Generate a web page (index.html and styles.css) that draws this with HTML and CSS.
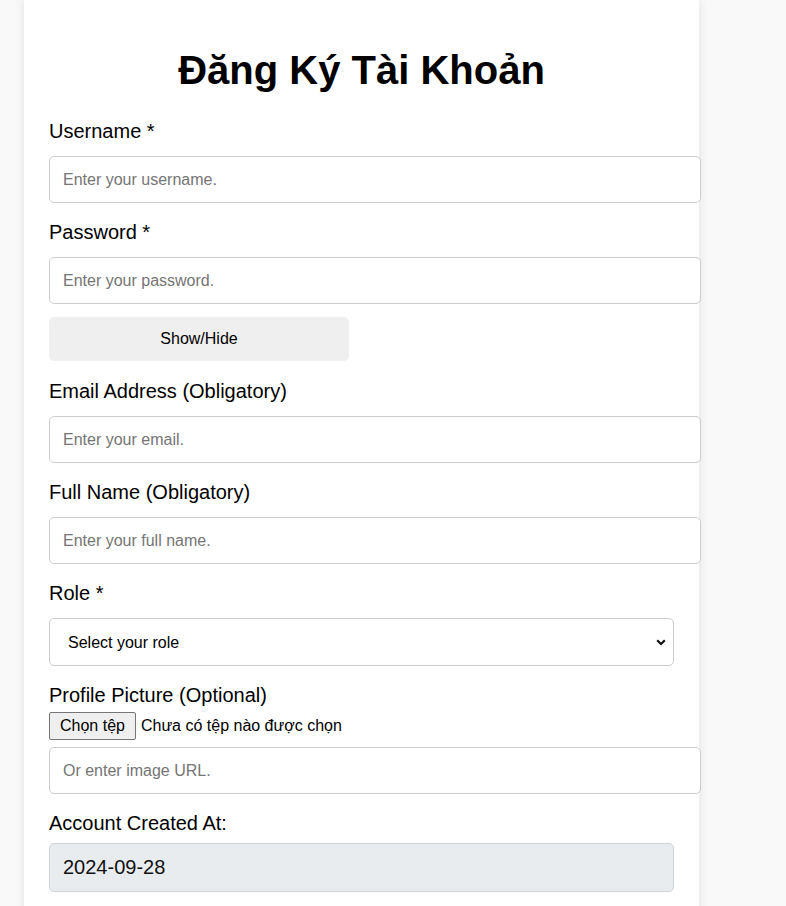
FILE: index.html
```html
<!DOCTYPE html>
<html lang="vi">
<head>
<meta charset="utf-8">
<title>Đăng Ký Tài Khoản</title>
<link rel="stylesheet" href="styles.css">
</head>
<body>
<div class="card">
  <h1 class="title">Đăng Ký Tài Khoản</h1>
  <form class="form">
    <div class="group">
      <label class="label">Username *</label>
      <input class="field" type="text" placeholder="Enter your username.">
    </div>
    <div class="group">
      <label class="label">Password *</label>
      <input class="field" type="password" placeholder="Enter your password.">
      <button type="button" class="toggle">Show/Hide</button>
    </div>
    <div class="group">
      <label class="label">Email Address (Obligatory)</label>
      <input class="field" type="email" placeholder="Enter your email.">
    </div>
    <div class="group">
      <label class="label">Full Name (Obligatory)</label>
      <input class="field" type="text" placeholder="Enter your full name.">
    </div>
    <div class="group">
      <label class="label">Role *</label>
      <div class="select-wrap">
        <select class="select">
          <option>Select your role</option>
        </select>
        <svg class="chevron" width="10" height="7" viewBox="0 0 10 7"><path d="M1.2 1.3 L5 5 L8.8 1.3" fill="none" stroke="#111" stroke-width="2.2"/></svg>
      </div>
    </div>
    <div class="group">
      <label class="label label-tight">Profile Picture (Optional)</label>
      <div class="file-row">
        <span class="file-btn">Chọn tệp</span>
        <span class="file-text">Chưa có tệp nào được chọn</span>
      </div>
      <input class="field" type="text" placeholder="Or enter image URL.">
    </div>
    <div class="group">
      <label class="label label-date">Account Created At:</label>
      <div class="date-box">2024-09-28</div>
    </div>
  </form>
</div>
</body>
</html>
```

FILE: styles.css
```css
html, body {
  margin: 0;
  padding: 0;
}
body {
  background: #f9f9f9;
  font-family: "Liberation Sans", Arial, sans-serif;
  color: #000;
}
.card {
  margin-left: 24px;
  width: 625px;
  padding: 47px 25px 40px;
  background: #fff;
  box-shadow: 0 0 10px rgba(0, 0, 0, 0.1);
  min-height: 900px;
}
.title {
  margin: 0 0 27px;
  font-size: 40px;
  line-height: 46px;
  font-weight: bold;
  text-align: center;
}
.form {
  display: flex;
  flex-direction: column;
}
.group {
  display: flex;
  flex-direction: column;
  align-items: flex-start;
  margin-bottom: 18px;
}
.label {
  font-size: 20px;
  line-height: 23px;
  margin-bottom: 13px;
}
.label-tight {
  margin-bottom: 5px;
}
.label-date {
  margin-bottom: 8px;
}
.field {
  width: 625px;
  box-sizing: content-box;
  padding: 12px 12px 12px 13px;
  border: 1px solid #ccc;
  border-radius: 5px;
  font-family: "Liberation Sans", Arial, sans-serif;
  font-size: 16px;
  line-height: 21px;
  height: 21px;
  color: #000;
  background: #fff;
  margin: 0;
  outline: none;
}
.field::placeholder {
  color: #757575;
}
.toggle {
  margin-top: 13px;
  margin-bottom: 1px;
  width: 300px;
  height: 44px;
  border: none;
  border-radius: 5px;
  background: #efefef;
  font-family: "Liberation Sans", Arial, sans-serif;
  font-size: 16px;
  color: #000;
  padding: 0;
}
.select-wrap {
  position: relative;
  width: 625px;
}
.select {
  appearance: none;
  -webkit-appearance: none;
  width: 625px;
  height: 48px;
  box-sizing: border-box;
  padding: 0 30px 0 18px;
  border: 1px solid #ccc;
  border-radius: 5px;
  background: #fff;
  font-family: "Liberation Sans", Arial, sans-serif;
  font-size: 16px;
  color: #000;
  margin: 0;
  display: block;
}
.chevron {
  position: absolute;
  right: 8px;
  top: 21px;
}
.file-row {
  display: flex;
  align-items: center;
  margin-bottom: 7px;
}
.file-btn {
  display: inline-block;
  box-sizing: border-box;
  height: 28px;
  padding: 0 10px;
  line-height: 26px;
  border: 1px solid #767676;
  border-radius: 2px;
  background: #efefef;
  font-size: 16px;
  color: #000;
  margin-right: 5px;
}
.file-text {
  font-size: 16px;
  line-height: 20px;
}
.date-box {
  width: 625px;
  box-sizing: border-box;
  height: 49px;
  padding: 0 13px;
  line-height: 47px;
  border: 1px solid #ced4da;
  border-radius: 5px;
  background: #e9ecef;
  font-size: 20px;
  color: #111;
}
```
